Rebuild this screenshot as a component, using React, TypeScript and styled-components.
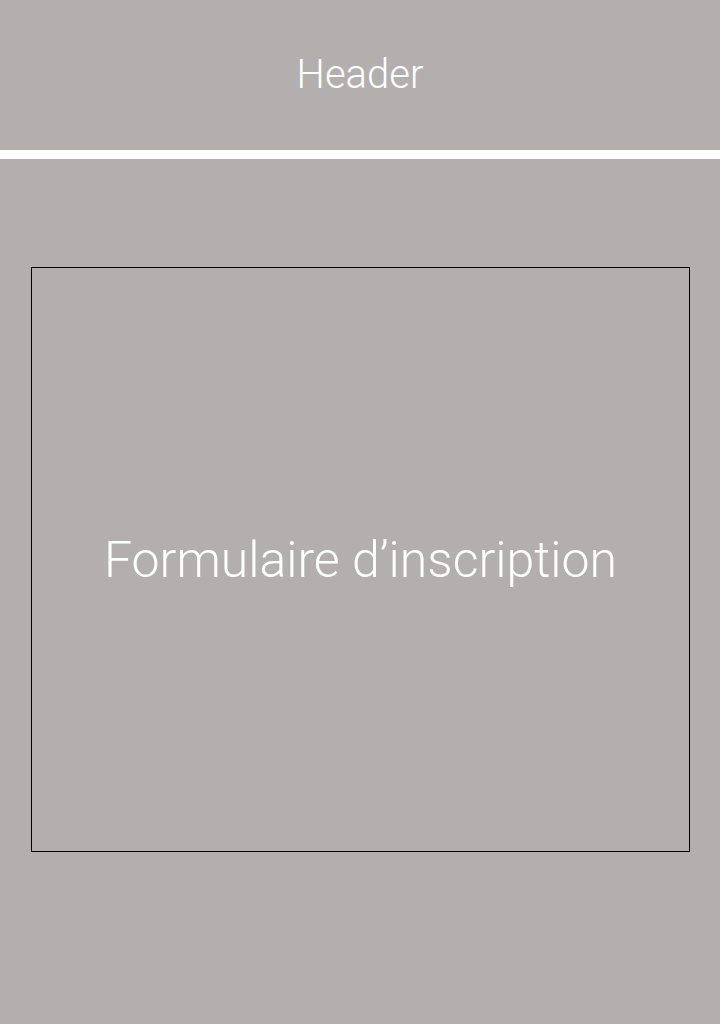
import React from 'react';
import styled, { createGlobalStyle } from 'styled-components';

const GlobalStyle = createGlobalStyle`
  html, body {
    margin: 0;
    padding: 0;
    background: #b3afae;
  }
  body {
    font-family: Roboto, "Open Sans", sans-serif;
  }
`;

const Page = styled.div`
  min-height: 1024px;
  background: #b3afae;
  display: flex;
  flex-direction: column;
`;

const Head = styled.header`
  height: 150px;
  border-bottom: 9px solid #ffffff;
  display: flex;
  align-items: center;
  justify-content: center;
`;

const HeadTitle = styled.h1`
  margin: 0;
  color: #ffffff;
  font-weight: 300;
  font-size: 40px;
  line-height: 1;
`;

const Main = styled.main`
  padding: 108px 30px 0 31px;
`;

const FormBox = styled.section`
  height: 583px;
  border: 1px solid #000000;
  display: flex;
  align-items: center;
  justify-content: center;
`;

const FormTitle = styled.h2`
  margin: 0;
  color: #ffffff;
  font-weight: 300;
  font-size: 50px;
  line-height: 1;
`;

export default function App() {
  return (
    <Page>
      <GlobalStyle />
      <Head>
        <HeadTitle>Header</HeadTitle>
      </Head>
      <Main>
        <FormBox>
          <FormTitle>Formulaire d’inscription</FormTitle>
        </FormBox>
      </Main>
    </Page>
  );
}
